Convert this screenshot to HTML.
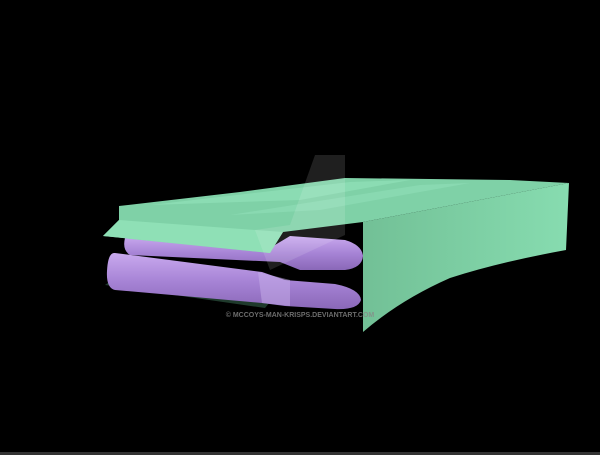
<!DOCTYPE html>
<html><head><style>html,body{margin:0;padding:0;background:#000;width:600px;height:455px;overflow:hidden}</style></head>
<body>
<svg width="600" height="455" viewBox="0 0 600 455" xmlns="http://www.w3.org/2000/svg">
<defs>
<linearGradient id="pu" x1="0" y1="0" x2="0" y2="1">
<stop offset="0" stop-color="#c9a9ee"/><stop offset="0.5" stop-color="#a784d6"/><stop offset="1" stop-color="#8a68b8"/></linearGradient>
<linearGradient id="gr" x1="0" y1="0" x2="1" y2="0">
<stop offset="0" stop-color="#72c096"/><stop offset="1" stop-color="#87dcb0"/></linearGradient>
</defs>
<rect width="600" height="455" fill="#000"/>
<rect x="0" y="452" width="600" height="3" fill="#333"/>
<polygon points="105,285 265,308 270,302 112,280" fill="#1f3a2c"/>
<!-- lower bullet -->
<path d="M115,253 L262,272 L285,280 L335,284 Q360,289 361,300 Q358,310 335,309 L285,306 L262,303 L115,290 Q106,288 107,271 Q108,252 115,253 Z" fill="url(#pu)"/>
<path d="M258,272 L290,280 L290,306 L262,303 Z" fill="#c7b0ea" opacity="0.5"/>
<!-- upper bullet -->
<path d="M125,238 L270,248 L290,236 L345,240 Q362,245 363,256 Q362,268 345,270 L300,270 L280,262 L130,255 Q122,250 125,238 Z" fill="url(#pu)"/>
<!-- top plate -->
<polygon points="119,206 240,192 345,178 510,180 569,183 363,222 283,232 270,253 103,236 119,220" fill="#7fd1a7"/>
<polygon points="103,236 119,220 283,232 270,253" fill="#8fe0b6"/>
<polygon points="150,205 350,182 410,180 300,200" fill="#93e2bb" opacity="0.6"/>
<polygon points="230,215 420,185 470,183 320,210" fill="#93e2bb" opacity="0.5"/>
<!-- right panel -->
<path d="M363,222 L569,183 L566,250 Q500,262 450,278 Q400,300 363,332 Z" fill="url(#gr)"/>
<!-- watermark -->
<polygon points="315,155 345,155 345,235 270,270 255,230 290,225" fill="#fff" opacity="0.12"/>
<text x="300" y="317" font-family="Liberation Sans, sans-serif" font-size="7" font-weight="bold" fill="#888" text-anchor="middle" opacity="0.8">© MCCOYS-MAN-KRISPS.DEVIANTART.COM</text>
</svg>
</body></html>
